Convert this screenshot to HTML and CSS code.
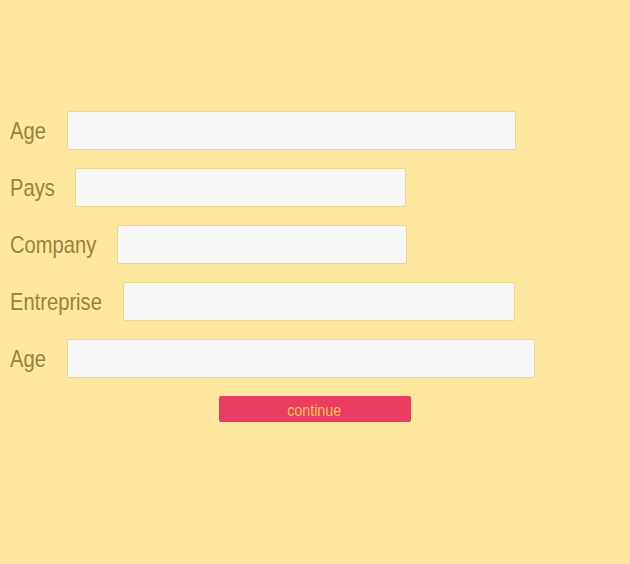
FILE: index.html
```html
<!DOCTYPE html>
<html lang="fr">
<head>
<meta charset="utf-8">
<title>Formulaire</title>
<link rel="stylesheet" href="styles.css">
</head>
<body>
<form class="form">
  <div class="row">
    <label class="label l-age" for="age1"><span class="narrow">Age</span></label>
    <input class="field w-age1" id="age1" type="text">
  </div>
  <div class="row">
    <label class="label l-pays" for="pays"><span class="narrow">Pays</span></label>
    <input class="field w-pays" id="pays" type="text">
  </div>
  <div class="row">
    <label class="label l-company" for="company"><span class="narrow">Company</span></label>
    <input class="field w-company" id="company" type="text">
  </div>
  <div class="row">
    <label class="label l-entreprise" for="entreprise"><span class="narrow">Entreprise</span></label>
    <input class="field w-entreprise" id="entreprise" type="text">
  </div>
  <div class="row">
    <label class="label l-age" for="age2"><span class="narrow">Age</span></label>
    <input class="field w-age2" id="age2" type="text">
  </div>
  <div class="actions">
    <button class="btn" type="button"><span class="narrow">continue</span></button>
  </div>
</form>
</body>
</html>
```
FILE: styles.css
```css
html, body {
  margin: 0;
  padding: 0;
  background: #fee89f;
}
body {
  width: 630px;
  height: 564px;
  font-family: "Liberation Sans", Arial, sans-serif;
}
.form {
  padding: 111px 0 0 10px;
  display: flex;
  flex-direction: column;
  gap: 18px;
}
.row {
  display: flex;
  align-items: center;
  height: 39px;
}
.label {
  font-size: 24px;
  color: #9c803a;
  margin-right: 21px;
  line-height: 39px;
  white-space: nowrap;
  flex: none;
}
.narrow {
  display: inline-block;
  transform: scaleX(0.84);
  transform-origin: left center;
}
.l-age { width: 36px; }
.l-pays { width: 44px; }
.l-company { width: 86px; }
.l-entreprise { width: 92px; }
.field {
  box-sizing: border-box;
  height: 39px;
  background: #f7f7f7;
  border: 1px solid #ecd792;
  border-radius: 2px;
  margin: 0;
  padding: 0 8px;
  outline: none;
  flex: none;
}
.w-age1 { width: 449px; }
.w-pays { width: 331px; }
.w-company { width: 290px; }
.w-entreprise { width: 392px; }
.w-age2 { width: 468px; }
.actions {
  display: flex;
  justify-content: center;
  margin-left: -10px;
}
.btn {
  width: 192px;
  height: 26px;
  border: none;
  border-radius: 2px;
  background: #ea3d5f;
  color: #f9c84c;
  font-family: "Liberation Sans", Arial, sans-serif;
  font-size: 17px;
  padding: 4px 0 0;
  margin-left: -1px;
  white-space: nowrap;
}
.btn .narrow {
  transform-origin: center center;
}
```
